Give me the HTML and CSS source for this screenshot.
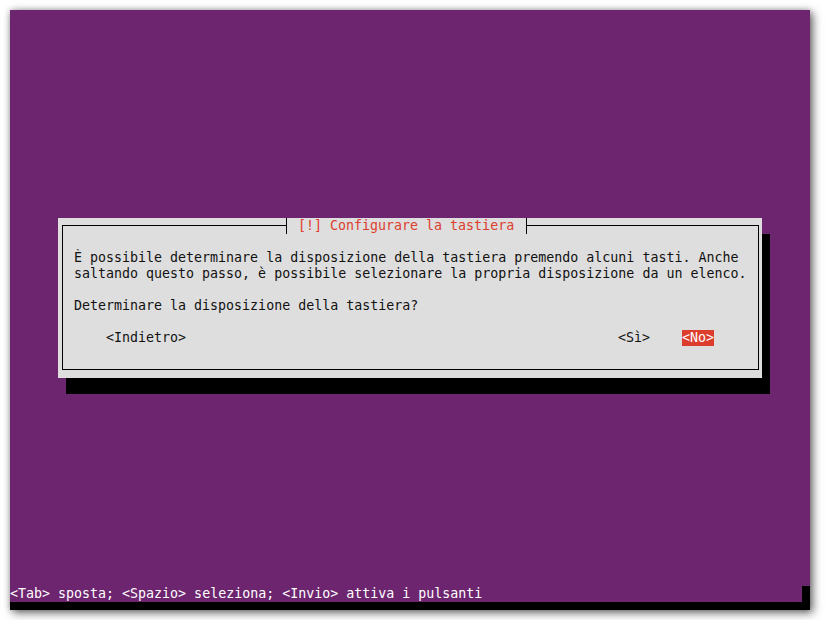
FILE: index.html
```html
<!DOCTYPE html>
<html lang="it">
<head>
    <meta charset="UTF-8">
    <title>Configurare la tastiera</title>
    <link rel="stylesheet" href="styles.css">
</head>
<body>
    <div class="screen">
        <div class="desktop">
            <!-- Dialog -->
            <div class="dialog">
                <div class="frame">
                    <div class="title">[!] Configurare la tastiera</div>
                    <p class="line">È possibile determinare la disposizione della tastiera premendo alcuni tasti. Anche</p>
                    <p class="line">saltando questo passo, è possibile selezionare la propria disposizione da un elenco.</p>
                    <p class="line">&nbsp;</p>
                    <p class="line">Determinare la disposizione della tastiera?</p>
                    <p class="line">&nbsp;</p>
                    <div class="buttons">
                        <span class="btn">&lt;Indietro&gt;</span>
                        <span class="btn btn-yes">&lt;Sì&gt;</span>
                        <span class="btn btn-active">&lt;No&gt;</span>
                    </div>
                </div>
            </div>
        </div>
        <!-- Help line -->
        <div class="status">
            <span class="status-text">&lt;Tab&gt; sposta; &lt;Spazio&gt; seleziona; &lt;Invio&gt; attiva i pulsanti</span>
        </div>
    </div>
</body>
</html>
```

FILE: styles.css
```css
body {
    margin: 0;
    padding: 0;
    background: #fff;
}

.screen {
    margin: 10px;
    width: 800px;
    height: 600px;
    background: #000;
    display: flex;
    flex-direction: column;
    font-family: "DejaVu Sans Mono", monospace;
    font-size: 13.3px;
    line-height: 16px;
    box-shadow: 3px 3px 9px rgba(0, 0, 0, 0.55), 0 0 6px rgba(0, 0, 0, 0.25);
}

.desktop {
    height: 576px;
    background: #6e2570;
    padding: 208px 0 0 48px;
    box-sizing: border-box;
}

.dialog {
    width: 704px;
    height: 160px;
    background: #dedede;
    color: #111;
    padding: 7px 3px 8px 4px;
    box-sizing: border-box;
    box-shadow: 8px 16px 0 #000;
}

.frame {
    position: relative;
    border: 1px solid #000;
    height: 145px;
    box-sizing: border-box;
    padding: 24px 0 0 11px;
}

.title {
    position: absolute;
    top: -8px;
    left: 223px;
    height: 16px;
    padding: 0 12px 0 11px;
    background: #dedede;
    border-left: 1px solid #000;
    border-right: 1px solid #000;
    color: #dc3d2c;
    white-space: pre;
}

.line {
    margin: 0;
    height: 16px;
    white-space: pre;
}

.buttons {
    display: flex;
    padding: 0 44px 0 32px;
}

.btn {
    white-space: pre;
}

.btn-yes {
    margin-left: auto;
    margin-right: 32px;
}

.btn-active {
    background: #dc3d2c;
    color: #fff;
}

.status {
    height: 16px;
    display: flex;
    padding-right: 8px;
}

.status-text {
    flex: 1;
    background: #6e2570;
    color: #fff;
    white-space: pre;
}
```
